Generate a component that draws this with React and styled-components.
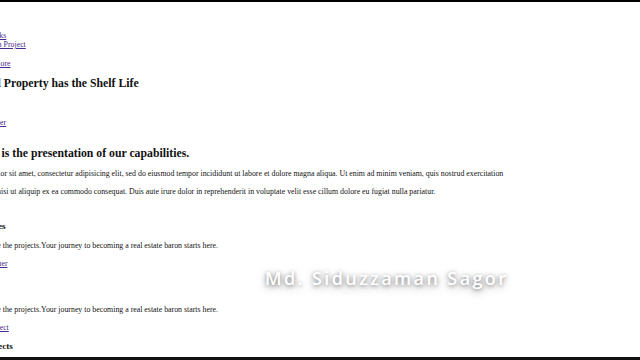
import styled, { createGlobalStyle } from "styled-components";

const GlobalStyle = createGlobalStyle`
  html, body {
    margin: 0;
    padding: 0;
    background: #000;
    overflow: hidden;
  }
`;

const Frame = styled.div`
  position: relative;
  width: 640px;
  height: 360px;
  box-sizing: border-box;
  border-top: 2px solid #000;
  border-bottom: 3px solid #111;
  background: #fff;
  overflow: hidden;
  font-family: "Liberation Serif", "Times New Roman", serif;
  color: #111;
`;

const Page = styled.div`
  display: flex;
  flex-direction: column;
  align-items: flex-start;
  margin-left: -53.5px;
  width: 700px;
`;

const NavList = styled.ul`
  list-style: none;
  margin: 29px 0 0;
  padding: 0;
  font-size: 7.85px;
  line-height: 9px;
`;

const NavItem = styled.li`
  white-space: nowrap;
`;

const Link = styled.a`
  display: block;
  margin-top: ${(p) => p.$top || 0}px;
  font-size: 7.85px;
  line-height: 9px;
  color: #4a2a8c;
  text-decoration: underline;
  white-space: nowrap;
  cursor: pointer;
`;

const Title = styled.h2`
  margin: ${(p) => p.$top || 0}px 0 0;
  font-size: 11.75px;
  line-height: 13px;
  font-weight: bold;
  white-space: nowrap;
`;

const Text = styled.p`
  margin: ${(p) => p.$top || 0}px 0 0;
  font-size: 7.85px;
  line-height: ${(p) => p.$lh || 9}px;
  max-width: ${(p) => p.$width || 700}px;
`;

const CardTitle = styled.h3`
  margin: ${(p) => p.$top || 0}px 0 0;
  font-size: 9.2px;
  line-height: 10px;
  font-weight: bold;
  white-space: nowrap;
`;

const Watermark = styled.div`
  position: absolute;
  left: 265px;
  top: 264px;
  font-family: "Open Sans", "DejaVu Sans", sans-serif;
  font-weight: 600;
  font-size: 18px;
  letter-spacing: 2.4px;
  color: #fff;
  white-space: nowrap;
  text-shadow: 0 1px 4px rgba(0, 0, 0, 0.45), 0 3px 10px rgba(0, 0, 0, 0.3);
`;

const cards = [
  {
    title: "Our Properties",
    top: 19.8,
    text: "Come in, explore the projects.Your journey to becoming a real estate baron starts here.",
    link: "Contact this Owner",
  },
  {
    title: "Villa",
    top: 17,
    text: "Come in, explore the projects.Your journey to becoming a real estate baron starts here.",
    link: "Explore this Project",
  },
];

export default function App() {
  return (
    <Frame>
      <GlobalStyle />
      <Page>
        <NavList>
          <NavItem>
            <Link href="#">Our Newest Works</Link>
          </NavItem>
          <NavItem>
            <Link href="#">Start Your Dream Project</Link>
          </NavItem>
        </NavList>
        <Link href="#" $top={10}>
          Browse and Explore
        </Link>
        <Title $top={9.2}>Your Land Property has the Shelf Life</Title>
        <Link href="#" $top={28.2}>
          Become a Member
        </Link>
        <Title $top={19.6}>Our Work is the presentation of our capabilities.</Title>
        <Text $top={5.2} $lh={18} $width={574}>
          Lorem ipsum dolor sit amet, consectetur adipisicing elit, sed do eiusmod tempor
          incididunt ut labore et dolore magna aliqua. Ut enim ad minim veniam, quis nostrud
          exercitation ullamco laboris nisi ut aliquip ex ea commodo consequat. Duis aute irure
          dolor in reprehenderit in voluptate velit esse cillum dolore eu fugiat nulla pariatur.
        </Text>
        {cards.map((card) => (
          <div key={card.link}>
            <CardTitle $top={card.top}>{card.title}</CardTitle>
            <Text $top={10.5}>{card.text}</Text>
            <Link href="#" $top={8.5}>
              {card.link}
            </Link>
          </div>
        ))}
        <CardTitle $top={9}>Selected Projects</CardTitle>
      </Page>
      <Watermark>Md. Siduzzaman Sagor</Watermark>
    </Frame>
  );
}
